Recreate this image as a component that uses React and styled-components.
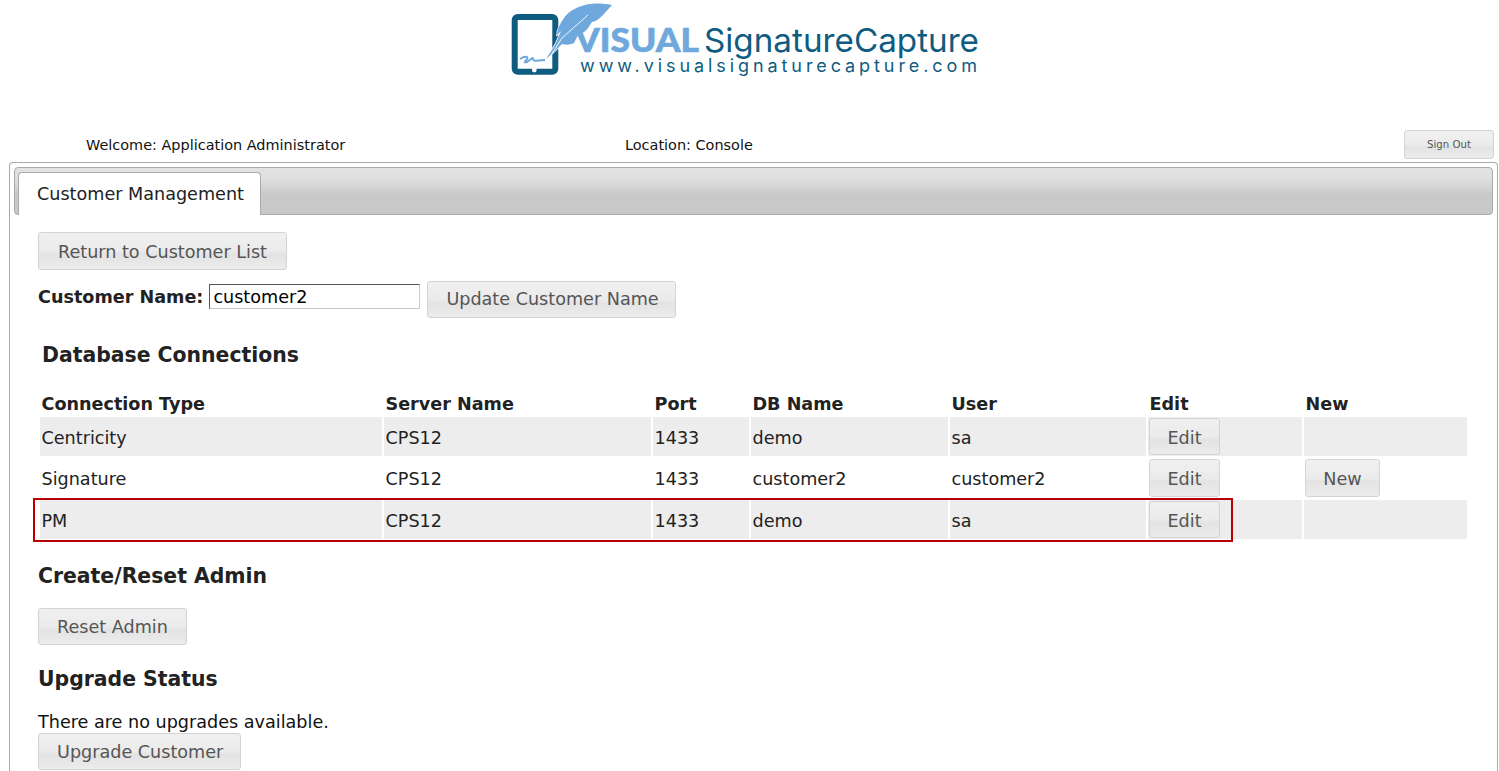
import styled, { createGlobalStyle } from 'styled-components'

const GlobalStyle = createGlobalStyle`
  html, body {
    margin: 0;
    padding: 0;
    background: #fff;
    overflow: hidden;
  }

  body {
    height: 771px;
    color: #222;
    font-family: Verdana, "DejaVu Sans", sans-serif;
  }
`

const Page = styled.div`
  position: relative;
  display: flex;
  flex-direction: column;
  width: 1499px;
  height: 771px;
  overflow: hidden;
`

const LogoRow = styled.header`
  display: flex;
  justify-content: center;
  height: 130px;
  padding-right: 9px;
`

const Logo = styled.svg`
  display: block;
  width: 490px;
  height: 85px;
`

const UserBar = styled.div`
  display: grid;
  grid-template-columns: 539px 779px 90px;
  align-items: center;
  height: 29px;
  padding-left: 86px;
  color: #111;
  font-size: 14.45px;
`

const UserText = styled.span`
  padding-top: 1px;
`

const Button = styled.button`
  box-sizing: border-box;
  width: ${({ $width }) => ($width ? `${$width}px` : 'auto')};
  height: ${({ $height }) => $height || 38}px;
  padding: 1px 18px 0;
  border: 1px solid #d3d3d3;
  border-radius: 3px;
  color: #555;
  background: linear-gradient(to bottom, #f0f0f0 0%, #ebebeb 50%, #e3e3e3 60%, #ececec 100%);
  font-family: inherit;
  font-size: ${({ $size }) => $size || 17.6}px;
  white-space: nowrap;
  cursor: pointer;
`

const SignOut = styled(Button)`
  padding: 0;
`

const UpdateButton = styled(Button)`
  padding-top: 0;
`

const RowButton = styled(Button)`
  display: block;
  padding: ${({ $height }) => ($height % 2 ? 2 : 1)}px 0 0;
`

const Panel = styled.main`
  flex: 1;
  margin: 3px 1px 0 9px;
  padding: 4px 4px 0;
  border: 1px solid #aaa;
  border-bottom: 0;
  border-radius: 4px 4px 0 0;
`

const TabBar = styled.div`
  display: flex;
  align-items: flex-end;
  height: 48px;
  box-sizing: border-box;
  padding-left: 3px;
  border: 1px solid #aaa;
  border-radius: 4px;
  background: linear-gradient(to bottom, #e3e3e3 0%, #dedede 25%, #c9c9c9 58%, #c8c8c8 100%);
`

const Tab = styled.div`
  display: flex;
  align-items: center;
  box-sizing: border-box;
  width: 243px;
  height: 43px;
  margin-bottom: -1px;
  padding-left: 18px;
  border: 1px solid #aaa;
  border-bottom: 0;
  border-radius: 4px 4px 0 0;
  color: #212121;
  background: #fff;
  font-size: 17.6px;
`

const Content = styled.div`
  display: flex;
  flex-direction: column;
  align-items: flex-start;
  padding: 17px 0 0 24px;
`

const NameRow = styled.div`
  display: flex;
  align-items: center;
  margin-top: 10px;
  height: 38px;
`

const NameLabel = styled.label`
  margin: 0 6px 4px 0;
  font-size: 17.6px;
  font-weight: 700;
`

const NameInput = styled.input`
  box-sizing: border-box;
  width: 211px;
  height: 25px;
  margin: 0 7px 5px 0;
  padding: 0 3px;
  border-width: 1px;
  border-style: solid;
  border-color: #555 #ccc #c8c5bc #555;
  color: #000;
  font-family: inherit;
  font-size: 17.6px;
  outline: 0;
`

const SectionTitle = styled.h2`
  margin: ${({ $top }) => $top}px 0 0 ${({ $indent }) => $indent || 0}px;
  color: #222;
  font-size: 20.4px;
  font-weight: 700;
  line-height: 24px;
`

const ActionButton = styled(Button)`
  margin-top: 20px;
`

const Table = styled.table`
  width: 1431px;
  margin: 24px 0 0;
  border-collapse: separate;
  border-spacing: 2px;
  table-layout: fixed;
  font-size: 17.6px;
`

const HeadCell = styled.th`
  height: 22px;
  padding: 0 0 0 1.5px;
  color: #222;
  font-weight: 700;
  text-align: left;
  vertical-align: middle;
`

const Row = styled.tr`
  background: ${({ $shaded }) => ($shaded ? '#ededed' : 'transparent')};
`

const Cell = styled.td`
  box-sizing: border-box;
  height: ${({ $height }) => $height}px;
  padding: 2px 0 0 1.5px;
  color: #222;
`

const ButtonCell = styled(Cell)`
  padding: 0 0 0 1px;
`

const Highlight = styled.div`
  position: absolute;
  top: 498px;
  left: 33px;
  box-sizing: border-box;
  width: 1200px;
  height: 44px;
  border: 2px solid #b90000;
  pointer-events: none;
`

const StatusText = styled.p`
  margin: 21px 0 0;
  color: #111;
  font-size: 17.6px;
  line-height: 21px;
`

const rows = [
  { type: 'Centricity', db: 'demo', user: 'sa', shaded: true, height: 39 },
  { type: 'Signature', db: 'customer2', user: 'customer2', isNew: true, height: 40 },
  { type: 'PM', db: 'demo', user: 'sa', shaded: true, height: 39 },
]

const columns = ['Connection Type', 'Server Name', 'Port', 'DB Name', 'User', 'Edit', 'New']
const columnWidths = [342, 267, 96, 197, 196, 154, 163]

function VscLogo() {
  return (
    <Logo viewBox="0 0 490 85" role="img" aria-label="Visual Signature Capture">
      <rect x="14.7" y="17" width="40.6" height="54.7" rx="3" fill="none" stroke="#0f5c80" strokeWidth="6" />
      <circle cx="34.3" cy="70" r="2.4" fill="#fff" />
      <path
        d="M20 59 C24 56 29 56 27 59 C25 62 23 63 27 62 C31 60 33 56 33 59 C33 62 38 60 45 60"
        fill="none"
        stroke="#6fa8dc"
        strokeWidth="2"
      />
      <path
        d="M112 5 C102 3 92 3 85 5 C76 7 68 12 64 18 C60 24 57 29 57 35 L61 31 L55 45 L46 59 L54 52 L62 44 C66 45 70 45 74 43 L78 35 C82 34 86 31 88 28 L92 22 C97 21 100 18 103 15 C106 12 109 8 112 5 Z"
        fill="#6fa8dc"
        stroke="#fff"
        strokeWidth="1.5"
        paintOrder="stroke"
      />
      <path d="M51 55 L62 38 L88 15" fill="none" stroke="#fff" strokeWidth="0.9" />
      <text x="75" y="52" fill="#6fa8dc" stroke="#6fa8dc" strokeWidth="0.6" fontFamily="Lato, sans-serif" fontSize="32" fontWeight="900" textLength="124" lengthAdjust="spacingAndGlyphs">
        VISUAL
      </text>
      <text x="204" y="52" fill="#0f5c80" fontFamily="Inter, sans-serif" fontSize="33" fontWeight="400" textLength="275" lengthAdjust="spacingAndGlyphs">
        SignatureCapture
      </text>
      <text x="80" y="72" fill="#0f5c80" fontFamily="Inter, sans-serif" fontSize="18" textLength="397">
        www.visualsignaturecapture.com
      </text>
    </Logo>
  )
}

function App() {
  return (
    <Page>
      <GlobalStyle />
      <LogoRow>
        <VscLogo />
      </LogoRow>
      <UserBar>
        <UserText>Welcome: Application Administrator</UserText>
        <UserText>Location: Console</UserText>
        <SignOut $width={90} $height={29} $size={10.2}>Sign Out</SignOut>
      </UserBar>
      <Panel>
        <TabBar>
          <Tab>Customer Management</Tab>
        </TabBar>
        <Content>
          <Button $width={249}>Return to Customer List</Button>
          <NameRow>
            <NameLabel htmlFor="customer-name">Customer Name:</NameLabel>
            <NameInput id="customer-name" defaultValue="customer2" />
            <UpdateButton $width={249} $height={37}>Update Customer Name</UpdateButton>
          </NameRow>
          <SectionTitle $top={25} $indent={4}>Database Connections</SectionTitle>
          <Table>
            <colgroup>
              {columnWidths.map((width, index) => (
                <col key={index} style={{ width }} />
              ))}
            </colgroup>
            <thead>
              <tr>
                {columns.map((column) => (
                  <HeadCell key={column}>{column}</HeadCell>
                ))}
              </tr>
            </thead>
            <tbody>
              {rows.map((row) => (
                <Row $shaded={row.shaded} key={row.type}>
                  <Cell $height={row.height}>{row.type}</Cell>
                  <Cell $height={row.height}>CPS12</Cell>
                  <Cell $height={row.height}>1433</Cell>
                  <Cell $height={row.height}>{row.db}</Cell>
                  <Cell $height={row.height}>{row.user}</Cell>
                  <ButtonCell $height={row.height}>
                    <RowButton $width={71} $height={row.height - 2}>Edit</RowButton>
                  </ButtonCell>
                  <ButtonCell $height={row.height}>
                    {row.isNew && <RowButton $width={75} $height={row.height - 2}>New</RowButton>}
                  </ButtonCell>
                </Row>
              ))}
            </tbody>
          </Table>
          <SectionTitle $top={23}>Create/Reset Admin</SectionTitle>
          <ActionButton $height={37}>Reset Admin</ActionButton>
          <SectionTitle $top={22}>Upgrade Status</SectionTitle>
          <StatusText>There are no upgrades available.</StatusText>
          <Button $width={203} $height={37}>Upgrade Customer</Button>
        </Content>
      </Panel>
      <Highlight />
    </Page>
  )
}

export default App
